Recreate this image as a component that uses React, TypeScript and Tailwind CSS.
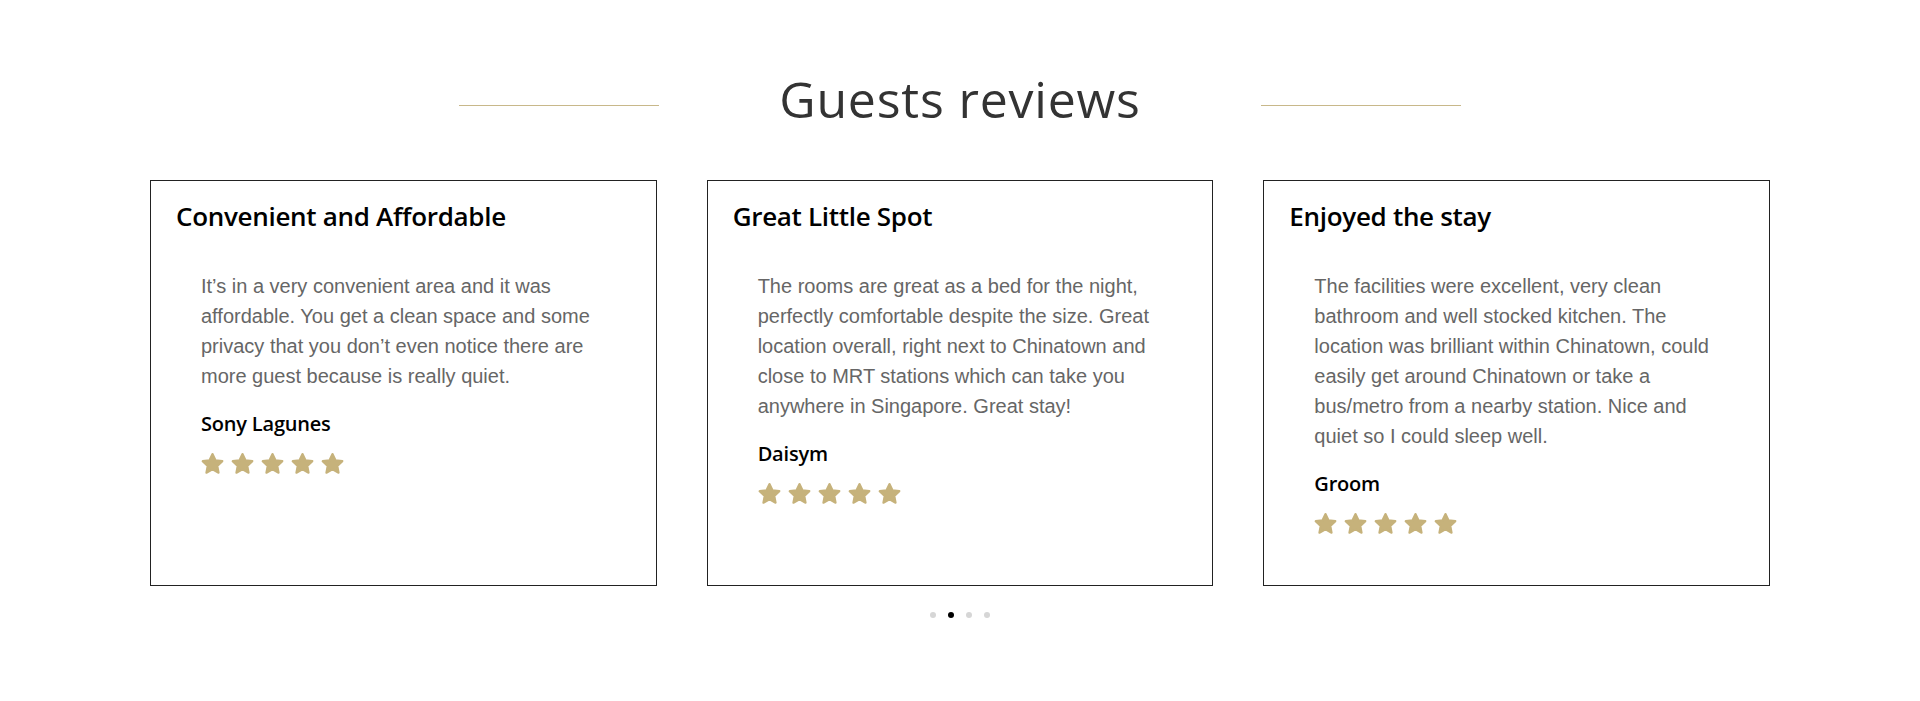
import React from 'react';

const reviews = [
  {
    title: 'Convenient and Affordable',
    text: 'It\u2019s in a very convenient area and it was affordable. You get a clean space and some privacy that you don\u2019t even notice there are more guest because is really quiet.',
    name: 'Sony Lagunes',
  },
  {
    title: 'Great Little Spot',
    text: 'The rooms are great as a bed for the night, perfectly comfortable despite the size. Great location overall, right next to Chinatown and close to MRT stations which can take you anywhere in Singapore. Great stay!',
    name: 'Daisym',
  },
  {
    title: 'Enjoyed the stay',
    text: 'The facilities were excellent, very clean bathroom and well stocked kitchen. The location was brilliant within Chinatown, could easily get around Chinatown or take a bus/metro from a nearby station. Nice and quiet so I could sleep well.',
    name: 'Groom',
  },
];

function Star() {
  // rounded five point star
  const cx = 12;
  const cy = 12.9;
  const R = 10.8;
  const r = 5.3;
  const pts: string[] = [];
  for (let i = 0; i < 10; i++) {
    const rad = i % 2 === 0 ? R : r;
    const a = (Math.PI / 5) * i - Math.PI / 2;
    pts.push(`${(cx + rad * Math.cos(a)).toFixed(2)},${(cy + rad * Math.sin(a)).toFixed(2)}`);
  }
  return (
    <svg width="23" height="23" viewBox="0 0 24 24">
      <polygon
        points={pts.join(' ')}
        fill="#c6b27b"
        stroke="#c6b27b"
        strokeWidth="2.2"
        strokeLinejoin="round"
      />
    </svg>
  );
}

function ReviewCard({ title, text, name }: { title: string; text: string; name: string }) {
  return (
    <div className="h-[406px] border border-[#222] bg-white px-[25px] pt-[19px]">
      <h3 className="font-['Open_Sans',sans-serif] text-[26px] font-semibold leading-[32px] tracking-[-0.3px] text-black">
        {title}
      </h3>
      <div className="px-[25px] pt-[39px]">
        <p className="font-['Liberation_Sans',Arial,sans-serif] text-[20px] leading-[30px] text-[#666]">
          {text}
        </p>
        <p className="mt-[21px] font-['Open_Sans',sans-serif] text-[20px] font-semibold leading-[24px] tracking-[-0.2px] text-black">
          {name}
        </p>
        <div className="mt-[16px] flex gap-[7px]">
          {[0, 1, 2, 3, 4].map((i) => (
            <Star key={i} />
          ))}
        </div>
      </div>
    </div>
  );
}

export default function App() {
  return (
    <div className="min-h-[701px] w-full bg-white">
      {/* Heading */}
      <div className="flex items-start justify-center pt-[69px]">
        <div className="mt-[36px] h-px w-[200px] bg-[#c8b88a]" />
        <h2 className="mx-[120px] font-['Open_Sans',sans-serif] text-[50px] font-normal leading-[60px] tracking-[0.8px] text-[#333]">
          Guests reviews
        </h2>
        <div className="mt-[36px] h-px w-[200px] bg-[#c8b88a]" />
      </div>

      {/* Cards */}
      <div className="mx-auto mt-[51px] grid w-[1620px] grid-cols-3 gap-[50px]">
        {reviews.map((r) => (
          <ReviewCard key={r.title} {...r} />
        ))}
      </div>

      {/* Dots */}
      <div className="mt-[26px] flex justify-center gap-[12px]">
        <span className="h-[6px] w-[6px] rounded-full bg-[#d6d6d6]" />
        <span className="h-[6px] w-[6px] rounded-full bg-black" />
        <span className="h-[6px] w-[6px] rounded-full bg-[#d6d6d6]" />
        <span className="h-[6px] w-[6px] rounded-full bg-[#d6d6d6]" />
      </div>
    </div>
  );
}
